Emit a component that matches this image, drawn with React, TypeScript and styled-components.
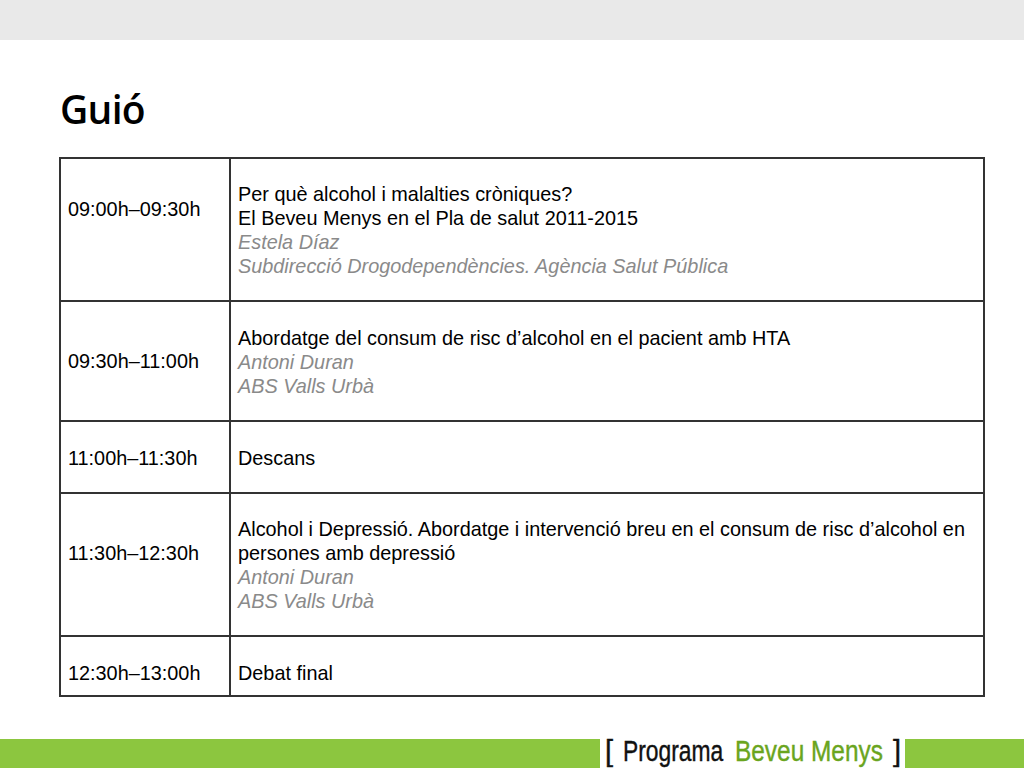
import styled, { createGlobalStyle } from "styled-components";

interface Session {
  time: string;
  height: number;
  timeLift?: number;
  drop?: number;
  talkDrop?: number;
  lines: string[];
  speaker?: string[];
}

const sessions: Session[] = [
  {
    time: "09:00h–09:30h",
    height: 143,
    timeLift: 42,
    lines: [
      "Per què alcohol i malalties cròniques?",
      "El Beveu Menys en el Pla de salut 2011-2015",
    ],
    speaker: ["Estela Díaz", "Subdirecció Drogodependències. Agència Salut Pública"],
  },
  {
    time: "09:30h–11:00h",
    height: 120,
    talkDrop: 2,
    lines: ["Abordatge del consum de risc d’alcohol en el pacient amb HTA"],
    speaker: ["Antoni Duran", "ABS Valls Urbà"],
  },
  { time: "11:00h–11:30h", height: 72, drop: 2, lines: ["Descans"] },
  {
    time: "11:30h–12:30h",
    height: 143,
    timeLift: 24,
    lines: [
      "Alcohol i Depressió. Abordatge i intervenció breu en el consum de risc d’alcohol en",
      "persones amb depressió",
    ],
    speaker: ["Antoni Duran", "ABS Valls Urbà"],
  },
  { time: "12:30h–13:00h", height: 60, drop: 14, lines: ["Debat final"] },
];

export default function App() {
  return (
    <>
      <GlobalStyle />
      <Page>
        <TopBar />
        <Title>Guió</Title>
        <Schedule>
          <colgroup>
            <col width={170} />
            <col />
          </colgroup>
          <tbody>
            {sessions.map((session) => (
              <tr key={session.time}>
                <TimeCell
                  $lift={session.timeLift ?? 0}
                  $drop={session.drop ?? 0}
                  style={{ height: session.height }}
                >
                  {session.time}
                </TimeCell>
                <TalkCell $drop={session.talkDrop ?? session.drop ?? 0}>
                  {session.lines.map((line) => (
                    <Line key={line}>{line}</Line>
                  ))}
                  {session.speaker &&
                    session.speaker.map((line) => <Speaker key={line}>{line}</Speaker>)}
                </TalkCell>
              </tr>
            ))}
          </tbody>
        </Schedule>
        <Footer>
          <GreenBlock $width="600px" />
          <Logo viewBox="0 0 305 29" width={305} height={29}>
            <LogoWord x={5} y={22} fill="#111" stroke="#111">
              [
            </LogoWord>
            {/* the logo's type is condensed, so squeeze the words sideways */}
            <LogoWord transform="translate(23 22) scale(0.787 1)" fill="#111" stroke="#111">
              Programa
            </LogoWord>
            <LogoWord transform="translate(135 22) scale(0.842 1)" fill="#6aa51e" stroke="#6aa51e">
              Beveu Menys
            </LogoWord>
            <LogoWord x={293} y={22} fill="#111" stroke="#111">
              ]
            </LogoWord>
          </Logo>
          <GreenBlock $width="119px" />
        </Footer>
      </Page>
    </>
  );
}

const GlobalStyle = createGlobalStyle`
  html, body {
    margin: 0;
    padding: 0;
    background: #fff;
  }
`;

const Page = styled.div`
  width: 1024px;
  height: 768px;
  display: flex;
  flex-direction: column;
  overflow: hidden;
  font-family: "Liberation Sans", Arial, sans-serif;
`;

const TopBar = styled.div`
  height: 40px;
  background-color: #e9e9e9;
`;

const Title = styled.h1`
  margin: 44px 0 0 60px;
  height: 73px;
  font-family: "Open Sans", "Noto Sans", sans-serif;
  font-size: 39px;
  font-weight: 600;
  line-height: 50px;
  letter-spacing: -0.7px;
  color: #000;
`;

const Schedule = styled.table`
  width: 926px;
  margin-left: 59px;
  border-collapse: collapse;
  table-layout: fixed;
  font-size: 19.85px;
  line-height: 24px;
  color: #000;

  td {
    border: 2px solid #333;
    vertical-align: middle;
  }
`;

const TimeCell = styled.td<{ $lift: number; $drop: number }>`
  padding: ${(p) => p.$drop}px 8px ${(p) => p.$lift}px 7px;
  white-space: nowrap;
  box-sizing: border-box;
`;

const TalkCell = styled.td<{ $drop: number }>`
  padding: ${(p) => p.$drop}px 8px 0 7px;
`;

const Line = styled.div``;

const Speaker = styled.div`
  font-style: italic;
  color: #8a8a8a;
`;

const Footer = styled.div`
  margin-top: auto;
  height: 29px;
  display: flex;
`;

const GreenBlock = styled.div<{ $width: string }>`
  width: ${(p) => p.$width};
  background-color: #8cc63f;
`;

const Logo = styled.svg`
  display: block;
  flex-shrink: 0;
  background: #fff;
  overflow: visible;
`;

const LogoWord = styled.text`
  font-family: "Liberation Sans", Arial, sans-serif;
  font-size: 29px;
  stroke-width: 0.4px;
`;
